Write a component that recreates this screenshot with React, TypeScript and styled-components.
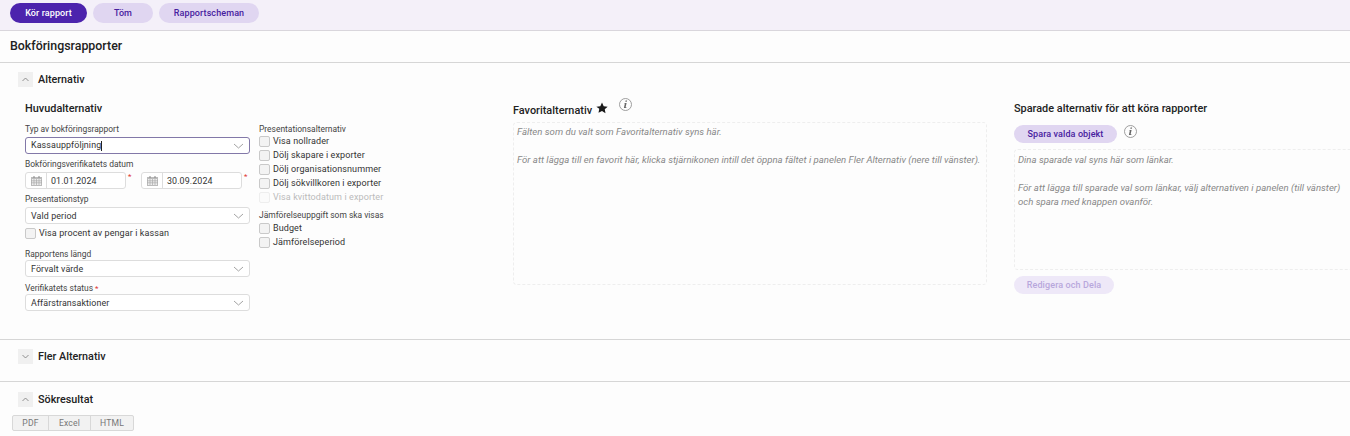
import React from "react";
import styled, { createGlobalStyle } from "styled-components";

const Global = createGlobalStyle`
  html, body { margin: 0; padding: 0; background: #fdfdfd; height: 436px; overflow: hidden; }
  body { font-family: Roboto, "Open Sans", sans-serif; color: #222; }
  * { box-sizing: border-box; }
`;

const Page = styled.div`width: 1350px; height: 436px; overflow: hidden;`;
const Toolbar = styled.div`
  height: 31px; background: #f4f0f9; border-bottom: 1px solid #d9d6dc;
  display: flex; gap: 6px; padding: 3px 0 0 10px; align-items: flex-start;
`;
const Pill = styled.button<{ $variant: "primary" | "secondary" | "disabled"; $w: number; $h?: number }>`
  width: ${(p) => p.$w}px; height: ${(p) => p.$h ?? 20}px; border: 0; border-radius: 10px; padding: 0;
  font: 500 9px Roboto, sans-serif; letter-spacing: 0.1px;
  background: ${(p) => (p.$variant === "primary" ? "#4c23ad" : p.$variant === "secondary" ? "#e0d6f1" : "#eee8f8")};
  color: ${(p) => (p.$variant === "primary" ? "#fff" : p.$variant === "secondary" ? "#47209f" : "#b8a7dc")};
`;
const PageTitle = styled.div`
  height: 32px; border-bottom: 1px solid #d6d6d6; padding-left: 10px;
  font: 500 12.4px/30px Roboto, sans-serif; color: #222;
`;
const Section = styled.section<{ $h: number }>`
  height: ${(p) => p.$h}px; border-bottom: 1px solid #d6d6d6; padding: 9px 0 0 18px; overflow: hidden;
`;
const LastSection = styled.section`padding: 10px 0 0 18px;`;
const Head = styled.div`display: flex; align-items: center; gap: 5px; height: 15px;`;
const Toggle = styled.span`
  width: 15px; height: 15px; background: #f0f0f0; display: flex; align-items: center; justify-content: center; color: #777;
`;
const HeadText = styled.span`font: 500 10.8px Roboto, sans-serif; color: #222;`;
const Columns = styled.div`display: flex; padding: 0 0 0 7px; margin-top: 14px;`;
const MainCol = styled.div`width: 234px; flex: none; padding-top: 1px;`;
const PresCol = styled.div`width: 254px; flex: none; padding-top: 23px;`;
const FavCol = styled.div`width: 501px; flex: none; padding-top: 3px;`;
const SavedCol = styled.div`width: 340px; flex: none; padding-top: 1px;`;
const H3 = styled.div`font: 500 10.9px/14px Roboto, sans-serif; color: #222; display: flex; align-items: center;`;
const Label = styled.div<{ $gap?: number }>`
  font: 400 8.45px/11px Roboto, sans-serif; color: #444; margin-top: ${(p) => p.$gap ?? 0}px; white-space: nowrap;
`;
const Req = styled.span`color: #d33; font-size: 8px; margin-left: 2px;`;
const Select = styled.div<{ $focus?: boolean; $mt?: number }>`
  width: 225px; height: 17px; margin-top: ${(p) => p.$mt ?? 2}px; border-radius: 3px; background: #fff;
  border: 1px solid ${(p) => (p.$focus ? "#8278a8" : "#ddd")};
  display: flex; align-items: center; justify-content: space-between; padding: 0 5px;
  font: 400 8.9px Roboto, sans-serif; letter-spacing: 0.1px; color: #333;
`;
const Caret = styled.span`display: inline-block; width: 1px; height: 10px; background: #222; vertical-align: middle;`;
const DateRow = styled.div`display: flex; margin-top: 2px;`;
const DateBox = styled.div`
  width: 101px; height: 17px; border: 1px solid #ddd; border-radius: 3px; background: #fff; display: flex; align-items: center;
  font: 400 8.9px Roboto, sans-serif; letter-spacing: 0.1px; color: #333;
`;
const DateIcon = styled.span`width: 21px; height: 100%; border-right: 1px solid #ddd; display: flex; align-items: center; justify-content: center; margin-right: 4px;`;
const DateReq = styled.span`width: 15px; color: #d33; font-size: 8px; line-height: 10px; padding-left: 2px; align-self: flex-start;`;
const CheckList = styled.div<{ $mt: number }>`margin-top: ${(p) => p.$mt}px;`;
const CheckRow = styled.label<{ $disabled?: boolean; $gap?: number }>`
  display: flex; align-items: center; height: 14px; gap: 3px; margin-top: ${(p) => p.$gap ?? 0}px;
  font: 400 9px Roboto, sans-serif; letter-spacing: 0.1px; color: ${(p) => (p.$disabled ? "#bbb" : "#333")}; white-space: nowrap;
`;
const Box = styled.span<{ $disabled?: boolean }>`
  width: 11px; height: 11px; border-radius: 2px; flex: none;
  background: ${(p) => (p.$disabled ? "#fbfbfb" : "#f3f3f3")}; border: 1px solid ${(p) => (p.$disabled ? "#eee" : "#c9c9c9")};
`;
const Dashed = styled.div<{ $h: number; $w: number; $mt: number; $size: number; $pt: number }>`
  width: ${(p) => p.$w}px; height: ${(p) => p.$h}px; margin-top: ${(p) => p.$mt}px; border: 1px dashed #eee; border-radius: 4px;
  padding: ${(p) => p.$pt}px 3px 3px; font: italic 400 ${(p) => p.$size}px/14px Roboto, sans-serif;
  color: #888; white-space: nowrap;
`;
const Spacer = styled.div`height: 14px;`;
const Star = styled.svg`margin: -6px 0 0 4px;`;
const InfoWrap = styled.span<{ $ml: number; $mt: number }>`
  margin-left: ${(p) => p.$ml}px; margin-top: ${(p) => p.$mt}px; display: inline-flex;
`;
const SaveRow = styled.div<{ $mt: number }>`display: flex; align-items: flex-start; margin-top: ${(p) => p.$mt}px;`;
const Group = styled.div`
  display: inline-flex; height: 16px; margin: 8px 0 0 -6px; border: 1px solid #d8d8d8; border-radius: 2px; background: #f2f2f2;
`;
const GroupBtn = styled.span<{ $w: number }>`
  width: ${(p) => p.$w}px; font: 400 8.6px/14px Roboto, sans-serif; letter-spacing: 0.2px; color: #777; text-align: center;
  & + & { border-left: 1px solid #d8d8d8; }
`;

const Chevron = ({ up }: { up?: boolean }) => (
  <svg width="7" height="5" viewBox="0 0 7 5" fill="none" stroke="#777" strokeWidth="0.8">
    <path d={up ? "M0.5 4L3.5 1L6.5 4" : "M0.5 1L3.5 4L6.5 1"} />
  </svg>
);
const SelChevron = () => (
  <svg width="11" height="6" viewBox="0 0 11 6" fill="none" stroke="#999" strokeWidth="0.9"><path d="M1 1L5.5 5L10 1" /></svg>
);
const Calendar = () => (
  <svg width="11" height="10" viewBox="0 0 11 10" fill="#aaa">
    <path d="M0 1h11v9H0z" fill="#bbb" />
    <path d="M1 3h9v6H1z" fill="#eee" />
    <path d="M0 4.8h11M0 6.8h11M3 3v6M5.5 3v6M8 3v6" stroke="#aaa" strokeWidth="0.7" />
    <path d="M2.5 0h1v2h-1zM7.5 0h1v2h-1z" fill="#888" />
  </svg>
);
const Info = () => (
  <svg width="13" height="13" viewBox="0 0 13 13">
    <circle cx="6.5" cy="6.5" r="6" fill="none" stroke="#888" strokeWidth="0.8" />
    <path d="M6.6 2.4h1.5l-.3 1.4H6.3zM6 5h1.6l-1 4.2h.9l-.2.8H4.9l.9-4.2H5z" fill="#666" />
  </svg>
);

const Sel = ({ children, focus, mt }: { children: React.ReactNode; focus?: boolean; mt?: number }) => (
  <Select $focus={focus} $mt={mt}><span>{children}</span><SelChevron /></Select>
);
const Check = ({ children, disabled, gap }: { children: string; disabled?: boolean; gap?: number }) => (
  <CheckRow $disabled={disabled} $gap={gap}><Box $disabled={disabled} />{children}</CheckRow>
);

export default function App() {
  return (
    <Page>
      <Global />
      <Toolbar>
        <Pill $variant="primary" $w={77}>Kör rapport</Pill>
        <Pill $variant="secondary" $w={60}>Töm</Pill>
        <Pill $variant="secondary" $w={100}>Rapportscheman</Pill>
      </Toolbar>
      <PageTitle>Bokföringsrapporter</PageTitle>
      <Section $h={277}>
        <Head><Toggle><Chevron up /></Toggle><HeadText>Alternativ</HeadText></Head>
        <Columns>
          <MainCol>
            <H3>Huvudalternativ</H3>
            <Label $gap={8}>Typ av bokföringsrapport</Label>
            <Sel focus>Kassauppföljning<Caret /></Sel>
            <Label $gap={5}>Bokföringsverifikatets datum</Label>
            <DateRow>
              <DateBox><DateIcon><Calendar /></DateIcon>01.01.2024</DateBox><DateReq>*</DateReq>
              <DateBox><DateIcon><Calendar /></DateIcon>30.09.2024</DateBox><DateReq>*</DateReq>
            </DateRow>
            <Label $gap={5}>Presentationstyp</Label>
            <Sel>Vald period</Sel>
            <Check gap={2}>Visa procent av pengar i kassan</Check>
            <Label $gap={9}>Rapportens längd</Label>
            <Sel mt={0}>Förvalt värde</Sel>
            <Label $gap={6}>Verifikatets status<Req>*</Req></Label>
            <Sel mt={0}>Affärstransaktioner</Sel>
          </MainCol>
          <PresCol>
            <Label>Presentationsalternativ</Label>
            <CheckList $mt={-1}>
              <Check>Visa nollrader</Check>
              <Check>Dölj skapare i exporter</Check>
              <Check>Dölj organisationsnummer</Check>
              <Check>Dölj sökvillkoren i exporter</Check>
              <Check disabled>Visa kvittodatum i exporter</Check>
            </CheckList>
            <Label $gap={6}>Jämförelseuppgift som ska visas</Label>
            <CheckList $mt={0}>
              <Check>Budget</Check>
              <Check>Jämförelseperiod</Check>
            </CheckList>
          </PresCol>
          <FavCol>
            <H3>
              Favoritalternativ
              <Star width="12" height="12" viewBox="0 0 24 24"><path d="M12 1l3.4 7.3 7.9 1-5.8 5.4 1.5 7.9L12 17.8l-7 3.8 1.5-7.9L.7 9.3l7.9-1z" fill="#1a1a1a" /></Star>
              <InfoWrap $ml={11} $mt={-13}><Info /></InfoWrap>
            </H3>
            <Dashed $w={474} $h={163} $mt={4} $size={9.6} $pt={2}>
              Fälten som du valt som Favoritalternativ syns här.
              <Spacer />
              För att lägga till en favorit här, klicka stjärnikonen intill det öppna fältet i panelen Fler Alternativ (nere till vänster).
            </Dashed>
          </FavCol>
          <SavedCol>
            <H3>Sparade alternativ för att köra rapporter</H3>
            <SaveRow $mt={9}>
              <Pill $variant="secondary" $w={103} $h={18}>Spara valda objekt</Pill>
              <InfoWrap $ml={7} $mt={0}><Info /></InfoWrap>
            </SaveRow>
            <Dashed $w={340} $h={121} $mt={6} $size={9.6} $pt={3}>
              Dina sparade val syns här som länkar.
              <Spacer />
              För att lägga till sparade val som länkar, välj alternativen i panelen (till vänster)<br />
              och spara med knappen ovanför.
            </Dashed>
            <SaveRow $mt={6}>
              <Pill $variant="disabled" $w={100} $h={18}>Redigera och Dela</Pill>
            </SaveRow>
          </SavedCol>
        </Columns>
      </Section>
      <Section $h={42}>
        <Head><Toggle><Chevron /></Toggle><HeadText>Fler Alternativ</HeadText></Head>
      </Section>
      <LastSection>
        <Head><Toggle><Chevron up /></Toggle><HeadText>Sökresultat</HeadText></Head>
        <Group>
          <GroupBtn $w={35}>PDF</GroupBtn>
          <GroupBtn $w={42}>Excel</GroupBtn>
          <GroupBtn $w={43}>HTML</GroupBtn>
        </Group>
      </LastSection>
    </Page>
  );
}
